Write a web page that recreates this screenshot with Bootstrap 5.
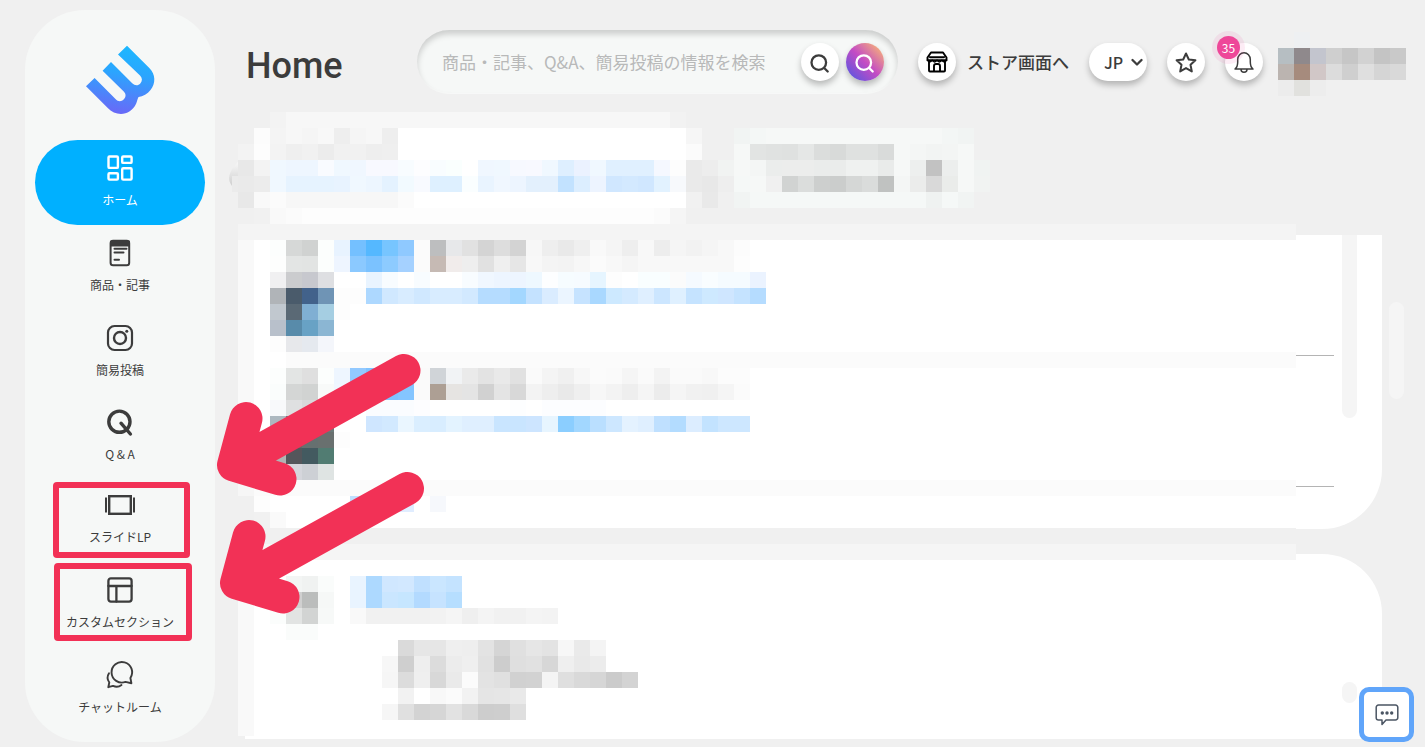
<!DOCTYPE html>
<html lang="ja">
<head>
<meta charset="utf-8">
<meta name="viewport" content="width=device-width, initial-scale=1">
<title>Home</title>
<link href="https://cdn.jsdelivr.net/npm/bootstrap@5.3.0/dist/css/bootstrap.min.css" rel="stylesheet">
<style>
  body { background: #f0f0f0; color: #3c3c3c; font-family: "Noto Sans CJK JP", sans-serif; }
  .side-panel { width: 190px; margin: 10px 0 5px 25px; padding: 0 10px 10px; background: #f6f8f7; border-radius: 60px; }
  .brand-area { height: 130px; padding-top: 32px; }
  .side-link { color: #3c3c3c; font-size: 12px; line-height: 18px; padding: 14px 0 16px; gap: 9px; border-radius: 43px; }
  .side-link svg { width: 28px; height: 28px; overflow: visible; }
  .side-link.latin { line-height: 15px; }
  .side-link.active { background: #00b0ff; color: #fff; }
  .ico { fill: none; stroke: currentColor; stroke-linecap: round; stroke-linejoin: round; }
  .ico.square { stroke-linecap: butt; stroke-linejoin: miter; }
  .main-area { padding-left: 30px; padding-top: 30px; }
  .top-bar { height: 64px; padding-right: 19px; gap: 20px; }
  .page-title { font: 500 36px/44px Roboto, sans-serif; width: 152px; padding: 8px 0 0 1px; }
  .search-box { height: 64px; border-radius: 32px; background: #f6f8f7; padding: 0 14px 0 25px; gap: 7px; box-shadow: inset 0 4px 6px rgba(0,0,0,.18), inset 0 -1px 1px rgba(255,255,255,.5); }
  .search-box input { font-size: 17px; color: #3c3c3c; min-width: 0; }
  .search-box input::placeholder { color: #b8b9b9; opacity: 1; }
  .round-btn { width: 38px; height: 38px; border: 0; padding: 0; border-radius: 50%; background: #fff; color: #3c3c3c; box-shadow: 0 4px 6px rgba(0,0,0,.25); }
  .round-btn.insta { background: linear-gradient(45deg, #5a55e0 8%, #c44cc4 50%, #f7b278 92%); color: #fff; }
  .store-link { color: #3c3c3c; font-size: 17px; font-weight: 500; gap: 11px; }
  .store-link .round-btn { color: #000; }
  .lang-pick { width: 58px; height: 38px; border-radius: 19px; background: #fff; box-shadow: 0 4px 6px rgba(0,0,0,.25); }
  .lang-pick select { appearance: none; border: 0; background: none; width: 58px; height: 38px; padding: 0 0 0 15px; font-size: 16px; font-weight: 500; color: #3c3c3c; }
  .lang-pick svg { position: absolute; right: 4px; top: 13px; pointer-events: none; }
  .count-dot { position: absolute; left: -8px; top: -7px; width: 23px; height: 23px; border-radius: 50%; background: #ee4799; color: #fff; font-size: 12px; line-height: 23px; box-shadow: 0 0 0 5px rgba(238,71,153,.1); }
  .user-blur { width: 128px; height: 68px; margin-left: -5px; }
  .tab-space { height: 141px; }
  .scroll-row { gap: 7px; padding-right: 21px; }
  .panel { background: #fff; padding-right: 48px; }
  .panel-feed { border-radius: 0 0 60px 60px; }
  .panel-notes { border-radius: 60px 60px 0 0; min-height: 185px; margin-top: 25px; }
  .feed-row { height: 121px; border-bottom: 1px solid #b4b4b4; }
  .feed-row + .feed-row { height: 131px; }
  .feed-end { height: 42px; }
  .thumb { width: 15px; background: #f5f5f5; border-radius: 8px; }
  .thumb-feed { position: absolute; right: 25px; top: 0; height: 183px; border-radius: 0 0 8px 8px; }
  .thumb-notes { position: absolute; right: 25px; top: 128px; height: 21px; }
  .thumb-page { height: 97px; margin-top: 67px; }
  .mosaic { position: absolute; left: 7px; top: 112px; width: 1074px; height: 624px; pointer-events: none; }
  .markup { position: absolute; left: 0; top: 0; width: 440px; height: 660px; pointer-events: none; }
  .chat-btn { position: fixed; right: 11px; bottom: 5px; width: 55px; height: 55px; background: #fff; border: 5px solid #60a5fa; border-radius: 10px; color: #4b5563; }
</style>
</head>
<body>
<div class="d-flex align-items-start position-relative">

  <aside class="side-panel flex-shrink-0">
    <div class="brand-area text-center">
      <a href="#" aria-label="Top">
        <svg width="76" height="76" viewBox="82 42 76 76">
          <defs><linearGradient id="brandFill" x1="0.6" y1="0" x2="0.45" y2="1"><stop offset="0" stop-color="#1cb8ff"/><stop offset=".4" stop-color="#2ba5fe"/><stop offset="1" stop-color="#6a68f7"/></linearGradient></defs>
          <path fill="url(#brandFill)" d="M86 86.2 L94.6 78 L115.5 99 C118 101.8 121.300 101.800 123.600 99.500 C126.300 96.800 126 94 124 91.700 L102.600 70.700 L111 62 L132.200 83.200 C134.800 85.800 138.200 85.800 140.300 83.400 C142.500 81 142.500 78 140 75.500 L118 54.500 L127 45.800 L149.300 68 C155.800 74.500 155.800 83.500 150.500 90 C147.500 94 143 96.300 138.500 97 C137.500 98.800 137.200 101.200 136.200 103.500 C130.800 115.500 116.500 117.500 107.500 107.700 Z"/>
        </svg>
      </a>
    </div>
    <nav class="d-flex flex-column">
      <a href="#" class="side-link active d-flex flex-column align-items-center text-decoration-none">
        <svg class="ico" viewBox="0 0 28 28" stroke-width="2.4"><rect x="2.500" y="2.500" width="9.400" height="11.400" rx="1"/><rect x="16.200" y="2.500" width="9.400" height="6.400" rx="1"/><rect x="2.500" y="19.200" width="9.400" height="6.400" rx="1"/><rect x="16.200" y="14.200" width="9.400" height="11.400" rx="1"/></svg>
        <span>ホーム</span>
      </a>
      <a href="#" class="side-link d-flex flex-column align-items-center text-decoration-none">
        <svg class="ico" viewBox="0 0 28 28" stroke-width="2"><rect x="4.600" y="1.800" width="18.600" height="24.400" rx="2.500"/><path d="M5 2.500h18v4H5z" fill="currentColor"/><path d="M8.500 9.800h12M8.500 13.500h9M8.500 20.800h4.500" stroke-width="2"/></svg>
        <span>商品・記事</span>
      </a>
      <a href="#" class="side-link d-flex flex-column align-items-center text-decoration-none">
        <svg class="ico" viewBox="0 0 28 28" stroke-width="2.200"><rect x="2" y="2" width="24" height="24" rx="6.500"/><circle cx="14" cy="14" r="6" stroke-width="2.400"/><circle cx="20.800" cy="7.200" r="1.500" fill="currentColor" stroke="none"/></svg>
        <span>簡易投稿</span>
      </a>
      <a href="#" class="side-link latin d-flex flex-column align-items-center text-decoration-none">
        <svg class="ico" viewBox="0 0 28 28" stroke-width="3.400"><circle cx="13.400" cy="12.700" r="10.600"/><path d="M15 14.200 24.400 25"/></svg>
        <span>Q &amp; A</span>
      </a>
      <a href="#" class="side-link d-flex flex-column align-items-center text-decoration-none">
        <svg class="ico square" viewBox="0 0 28 28" stroke-width="2.400"><rect x="3.200" y="5.200" width="21.600" height="17.600"/><path d="M0 6.500v15M28 6.500v15" stroke-width="2"/></svg>
        <span>スライドLP</span>
      </a>
      <a href="#" class="side-link d-flex flex-column align-items-center text-decoration-none">
        <svg class="ico" viewBox="0 0 28 28" stroke-width="2.300"><rect x="2.400" y="2.400" width="23.200" height="23.200" rx="2.500"/><path d="M2.400 10h23.200M10.400 10v15.600"/></svg>
        <span>カスタムセクション</span>
      </a>
      <a href="#" class="side-link d-flex flex-column align-items-center text-decoration-none">
        <svg class="ico" viewBox="0 0 28 28" stroke-width="1.900"><path d="M19.500 20.900A10.300 10.300 0 1 1 24.400 17l1 5.200-5.900-1.300"/><path d="M3 12.300C.9 15.500 1.300 18.800 3.300 21.500L2.300 26.200 7 24.900C10.200 26.300 13.500 25.600 15.500 24"/></svg>
        <span>チャットルーム</span>
      </a>
    </nav>
  </aside>

  <main class="main-area flex-grow-1 position-relative">
    <header class="top-bar d-flex align-items-center">
      <h1 class="page-title m-0 flex-shrink-0">Home</h1>
      <form class="search-box d-flex align-items-center flex-grow-1" role="search">
        <input type="text" class="flex-grow-1 border-0 bg-transparent p-0" placeholder="商品・記事、Q&amp;A、簡易投稿の情報を検索" aria-label="検索">
        <button type="button" class="round-btn flex-shrink-0" aria-label="検索する"><svg class="ico" width="22" height="22" viewBox="0 0 22 22" stroke-width="2.300"><circle cx="9.800" cy="9.600" r="7.300"/><path d="m15.200 15 3.500 3.500"/></svg></button>
        <button type="button" class="round-btn insta flex-shrink-0" aria-label="簡易投稿を検索する"><svg class="ico" width="22" height="22" viewBox="0 0 22 22" stroke-width="2.300"><circle cx="9.800" cy="9.600" r="7.300"/><path d="m15.200 15 3.500 3.500"/></svg></button>
      </form>
      <a href="#" class="store-link d-flex align-items-center text-decoration-none flex-shrink-0">
        <span class="round-btn d-flex align-items-center justify-content-center"><svg class="ico" width="24" height="24" viewBox="0 0 24 24" stroke-width="1.900"><path d="M6 2.500h12l3.500 5v2.700H2.500V7.500zM4 12v8.500a1 1 0 0 0 1 1h14a1 1 0 0 0 1-1V12M9 21v-5a2 2 0 0 1 2-2h2a2 2 0 0 1 2 2v5M5 7.300h14"/><path d="M2.500 10.200q2.300 3.500 4.700 0 2.400 3.500 4.800 0 2.400 3.500 4.800 0 2.400 3.500 4.700 0" stroke-width="1.500"/></svg></span>
        <span>ストア画面へ</span>
      </a>
      <div class="lang-pick position-relative flex-shrink-0">
        <select aria-label="言語"><option>JP</option></select>
        <svg class="ico" width="12" height="12" viewBox="0 0 12 12" stroke-width="2.300"><path d="m1.500 4 4.500 4.500L10.500 4"/></svg>
      </div>
      <button type="button" class="round-btn flex-shrink-0" aria-label="お気に入り"><svg class="ico" width="24" height="24" viewBox="0 0 24 24" stroke-width="2"><path d="m12 2.500 2.800 6 6.600.8-4.900 4.500 1.300 6.600-5.800-3.300-5.800 3.300 1.300-6.600-4.900-4.500 6.600-.8z"/></svg></button>
      <button type="button" class="round-btn position-relative flex-shrink-0" aria-label="お知らせ">
        <svg class="ico" width="24" height="24" viewBox="0 0 24 24" stroke-width="1.500"><path d="M3 18C5 16.500 5.700 14.500 5.700 11V8.500C5.700 4.800 8.500 1.800 12 1.800s6.300 3 6.300 6.700V11c0 3.500.7 5.500 2.700 7zM9 18.300a3 3 0 0 0 6 0"/></svg>
        <span class="count-dot">35</span>
      </button>
      <svg class="user-blur flex-shrink-0" viewBox="0 0 128 68" shape-rendering="crispEdges" aria-hidden="true"></svg>
    </header>

    <div class="tab-space"></div>

    <div class="scroll-row d-flex align-items-start">
      <div class="flex-grow-1">
        <section class="panel panel-feed position-relative">
          <div class="feed-row"></div>
          <div class="feed-row"></div>
          <div class="feed-end"></div>
          <div class="thumb thumb-feed"></div>
        </section>
        <section class="panel panel-notes position-relative">
          <div class="thumb thumb-notes"></div>
        </section>
      </div>
      <div class="thumb thumb-page"></div>
    </div>

    <svg class="mosaic" viewBox="222 112 1074 624" shape-rendering="crispEdges" aria-hidden="true">
      <defs><linearGradient id="edgeShade" x1="0" y1="0" x2="0" y2="1"><stop offset="0" stop-color="#f8f8f8"/><stop offset="1" stop-color="#c8c8c8"/></linearGradient></defs>
      <path d="M238 162q-14 14-6 24l6 4z" fill="url(#edgeShade)" shape-rendering="auto"/>
    </svg>
  </main>

  <svg class="markup" viewBox="0 0 440 660" fill="none" stroke="#f23156" aria-hidden="true">
    <rect x="56" y="485" width="131" height="70" rx="1" stroke-width="6" stroke-linejoin="round"/>
    <rect x="57" y="566" width="132" height="72" rx="1" stroke-width="6" stroke-linejoin="round"/>
    <g stroke-width="33" stroke-linecap="round" stroke-linejoin="round">
      <path d="M404 370.500 234 465M246 418.500 233.500 465 280 479"/>
      <path d="M407.500 488.500 237 583M249 536.500 236.500 583 283 597"/>
    </g>
  </svg>
</div>

<button type="button" class="chat-btn d-flex align-items-center justify-content-center p-0" aria-label="チャット">
  <svg class="ico" width="24" height="24" viewBox="0 0 24 24" stroke-width="1.500"><path d="M3.500 2h17a2.300 2.300 0 0 1 2.300 2.300v10.400a2.300 2.300 0 0 1-2.300 2.300H11l-4 4.500V17H3.500a2.300 2.300 0 0 1-2.300-2.300V4.300A2.300 2.300 0 0 1 3.500 2z"/><g fill="currentColor" stroke="none"><circle cx="7.300" cy="10" r="1.700"/><circle cx="12" cy="10" r="1.700"/><circle cx="16.700" cy="10" r="1.700"/></g></svg>
</button>

<script src="https://cdn.jsdelivr.net/npm/bootstrap@5.3.0/dist/js/bootstrap.bundle.min.js"></script>
<script>
  // Pixelated areas. A tile is a grey level (two digits) or a full hex colour; "*n" repeats it, "." skips one.
  const NS = 'http://www.w3.org/2000/svg';
  function tile(svg, x, y, w, h, c) {
    const r = document.createElementNS(NS, 'rect');
    r.setAttribute('x', x); r.setAttribute('y', y);
    r.setAttribute('width', w); r.setAttribute('height', h);
    r.setAttribute('fill', '#' + (c.length === 2 ? c + c + c : c));
    svg.appendChild(r);
  }
  function row(svg, left, col, y, list) {
    let x = left + col * 16;
    for (const part of list.split(' ')) {
      const [c, n = 1] = part.split('*');
      if (c !== '.') tile(svg, x, y, 16 * n, 16, c);
      x += 16 * n;
    }
  }
  const user = document.querySelector('.user-blur');
  [[1, 4, 'eef0f2'],
   [0, 20, 'b6bec2 8f898c c3c5ce cf c6 d2 c4 c9'],
   [0, 36, 'bbb4b0 a68b7d d1c7c7 dc cf df d5 d9'],
   [0, 52, 'ec e1e1de ed']].forEach(r => row(user, 0, ...r));

  const m = document.querySelector('.mosaic');
  tile(m, 238, 224, 1058, 16, 'f4');
  tile(m, 254, 240, 1042, 288, 'ff');
  tile(m, 238, 240, 16, 256, 'f9');
  tile(m, 286, 352, 1010, 16, 'fb');
  tile(m, 254, 480, 1042, 16, 'fb');
  tile(m, 238, 528, 1058, 16, 'f0');
  tile(m, 238, 544, 1058, 16, 'f5');
  tile(m, 254, 560, 1042, 176, 'ff');
  tile(m, 238, 560, 16, 176, 'f9');
  tile(m, 232, 176, 6, 16, 'eb');
  [[3, 112, 'f3 f7*24 f2'],
   [2, 128, 'fc f4 f7 f5 f8 ee f5 f7 ee ff*18 f6 .*2 f1f4f3 f4f7f6 f6f8f7*11 f3f6f5 f1f4f3'],
   [1, 144, 'f3 fd f3 ef f1 ec f1 f1 ee ef ff*18 fb .*2 f6f8f7 e2e4e3 e0e2e1 dfe1e0 e5e7e6 dbdddc d8dad9 dfe1e0*2 d9dbda f6f8f7 f4f6f5 f2f4f3 f3f5f4 f6f8f7'],
   [1, 160, 'e8 f3 f0f8ff eef6ff*2 f9fbff f0f8ff f0f7ff f8f9ff*2 f8fcff fdfdff f9fdff fafffe ff f0f7ff f0f8ff f7f9ff f8f9ff f0f8ff deefff ebf2ff f0f8ff e0f0ff*3 f5f8ff fd ea ed f1f3f2 f6f8f7 f4f6f5 ebedec ecedec*2 eaeceb*2 eff1f0*2 e9ebea f6f8f7 edefee c2 eceeed f6f8f7 f0f3f2'],
   [1, 176, 'ea ec f0f8ff e6f3ff*3 e8f3ff f0f8ff edf6ff e4f2ff f2faff f8faff def0ff*2 fafeff e9f4ff f0f7ff edf5ff e3f0fd*2 c2e2ff dceeff edf4ff d0e7ff d3e9ff d0e7ff e2f2ff f7f9fc ea e8 ee f5f8f7 f6f8f7 f0 d1d3d2 dbdddc cdcfce cbcdcc d5d7d6 dadcdb c0c2c1 f4f6f5 ebeceb d9 eaecea f6f8f7 f1f3f2'],
   [1, 192, 'e8 f9 fb f7*7 fb ff*17 f1 e9 f0 f1f4f3 f5f8f7*11 eff2f1 f5f8f7 f1f4f3'],
   [1, 208, 'f0 f1 f9 fb fd*22 fb f5'],
   [3, 240, 'fcfefd d6d8d7 d0d2d1 fcfefd e8f3ff 74c0ff 55b8ff 77c5ff 8fc9ff fb bdbebf e7e8ea e1 d4 dd d3 f7 ee e9 ef f9 f5 ee f8 ed f5 f2 f5 f8 fc'],
   [3, 256, 'fdfefd e3e5e4 e2e4e3 fcfefd eef5ff 8bc9ff 7bc2ff 8dcbff a5d1ff fb c6bab4 f1eceb ee e1 ef e6 f8 f4 f3 f7 fb f8 f5 f8*6 fd'],
   [3, 272, 'f0f0f1 cbccce c7c8ce dedfe2 ff*2 e9f4ff f8fcff ff f8fcff ff*2 f8fcff f0f7ff edf5ff*2 eef8ff fdfeff f6fcff f6fbff e6f5ff fd ff f9feff*2 fb f5faff f9fdff f5fbff*2 ebf3ff'],
   [3, 288, 'b0b4b8 4a5b6b 42628b 6f94b5 fd*2 add8ff d0e8ff d8ecff d0e8ff d8ecff*2 d2e9ff b5dcff*2 a3d7ff c4e2ff daecff ebf5ff c6e3ff a9d8ff cde9ff d4eaff dfefff cce6ff dff0ff c5e3ff cee9ff cfe6ff c5e3ff b5dcff'],
   [3, 304, 'c1c8cf 5a6975 80afd3 a5cee2 fd'],
   [3, 320, 'b8c0cb 588baa 68a2c5 8bb6d3'],
   [3, 336, 'fd e7e8eb e5e9ef f4f6fb'],
   [3, 368, 'fcfefd e3e5e4 df fcfefd eef6ff 92c9ff 7fc2ff*2 8fcaff fa d0d4d8 f1f3f5 ea e3 e9 e1 fa f4 f0 f7 fb fa f5 fa f3 fa fa f8 fc fc'],
   [3, 384, 'fafdfc d4d6d5 d1d3d2 f8faf9 f0f6ff 7fc2ff*3 84c5ff fa ad9f94 e6e4e2 e4 d1 e4 d8 f3 ee e9 ef f7 f3 ee f5 ec f5 f1 f0 f5 fb'],
   [3, 400, 'f8f9fb dfe0e1 d8d9da e5 ff*2 fafcff*3 fdfdff ff*5 fdfeff ff fcfdff*4'],
   [3, 416, 'adb8c0 6a7a80 607070 6a7a7a ff*2 cfe6ff d2e9ff eaf6ff daeeff d8edff e3f3ff dfefff*2 c9e5ff*2 cde5ff e7f5ff 8bceff a2d7ff badfff cde7ff e4f2ff dfefff bfe0ff b3dcff dcedff c3e3ff cde7ff*2'],
   [3, 432, '90 606868 667070 69706f fd'],
   [3, 448, 'b0b4b4 54565b 435a60 517c72'],
   [4, 464, 'd5d6dc cdd0d5 dfe4e3'],
   [1, 480, 'f6'],
   [1, 496, 'f0 fd .*5 bfdfff .*2 e0edff . f6f8fc'],
   [1, 512, 'f0 f1 fa'],
   [4, 576, 'f3f5f4 f0f2f1 fafcfb . e9f4ff add9ff d0e7ff d2e8ff c0e0ff cae6ff c4e3ff'],
   [4, 592, 'd0 bbbdbc f6f8f7 . e9f4ff add9ff cae6ff c6e6ff b3daff c6e3ff b6deff'],
   [3, 608, 'fbfdfc e2e4e3 d2d4d3 f7f9f8 . f9 f1*4 f2 f5 ef f4 f1 f1 f4 f3'],
   [4, 624, 'fafcfb*2'],
   [11, 640, 'da e6*2 ef ee e3 d5 e0 e6 e3 f7 ea f4'],
   [10, 656, 'f7 cf ee dc ec ef e1 cd df e1 d7 ef e9 ec'],
   [10, 672, 'f6 dc ef d8 ea fb e3 e0 d1 d2 f4 df d9 d6 cb d3'],
   [11, 688, 'f2 ff f8 fb f2 e5 e6 e9'],
   [10, 704, 'f6 e0 d3 d6 e2 d9 cd ce df']].forEach(r => row(m, 222, ...r));
</script>
</body>
</html>
